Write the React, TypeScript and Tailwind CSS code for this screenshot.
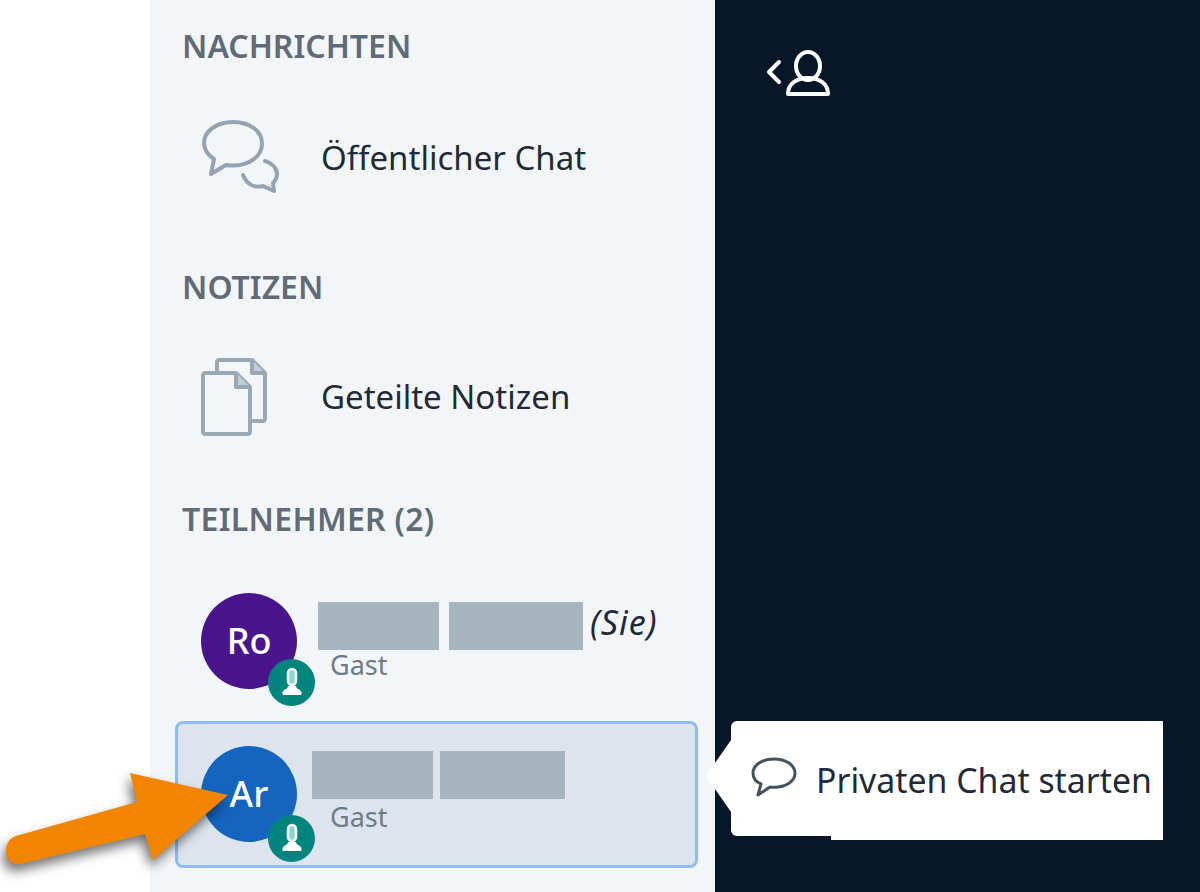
import React from 'react';

const SectionLabel = ({ children, className }: { children: React.ReactNode; className: string }) => (
  <div className={`h-[40px] pl-[32px] text-[32px] leading-[40px] font-semibold text-[#5f6b76] ${className}`}>{children}</div>
);

const BubblesIcon = () => (
  <svg width="80" height="76" viewBox="0 0 80 76" fill="none" stroke="#94a3af" strokeWidth="4" strokeLinejoin="round" strokeLinecap="round">
    <path d="M33 2C17 2 4 11 4 23c0 7 4 12 10 16l-3 15 15-9c2 .4 5 .5 7 .5 16 0 29-9 29-22S49 2 33 2z" />
    <path d="M65 41c7 2 12 7 12 13 0 4-2 7-4 9l1 8-11-5c-8 2-16-1-20-11" />
  </svg>
);

const NotesIcon = () => (
  <svg width="66" height="78" viewBox="0 0 66 78" fill="none" stroke="#9aa8b4" strokeWidth="4" strokeLinejoin="round">
    <path d="M16 13V4c0-1 1-2 2-2h33l13 13v46c0 1-1 2-2 2H49" />
    <path d="M51 2v13h13" fill="#c3ced7" />
    <path d="M4 15h31l14 14v45c0 1-1 2-2 2H4c-1 0-2-1-2-2V17c0-1 1-2 2-2z" />
    <path d="M35 15v14h14" fill="#c3ced7" />
  </svg>
);

const Badge = ({ className }: { className: string }) => (
  <div className={`absolute left-[67px] flex h-[47px] w-[47px] items-center justify-center rounded-full bg-[#00857e] ${className}`}>
    <svg width="26" height="30" viewBox="0 0 26 30">
      <rect x="9" y="2" width="8" height="16" rx="4" fill="#8fd6d2" stroke="#ffffff" strokeWidth="2.5" />
      <path d="M9 19h8c0 2 2 3 4 4 2 2 2 4 1 5H4c-1-1-1-3 1-5 2-1 4-2 4-4z" fill="#ffffff" />
    </svg>
  </div>
);

const Avatar = ({ initials, color, badgeTop }: { initials: string; color: string; badgeTop: string }) => (
  <div className={`relative flex h-[96px] w-[96px] shrink-0 items-center justify-center rounded-full text-[36px] font-medium text-white ${color}`}>
    {initials}
    <Badge className={badgeTop} />
  </div>
);

const ArrowOverlay = () => (
  <svg className="absolute left-0 top-[760px] drop-shadow-[-3px_7px_6px_rgba(0,0,0,0.55)]" width="240" height="120" viewBox="0 760 240 120">
    <path d="M228 795 L130 773 L137 802 L16 836 C2 840 2 866 20 864 L145 834 L153 860 Z" fill="#f28500" />
  </svg>
);

export default function App() {
  return (
    <div className="relative flex h-[892px] w-[1200px] overflow-hidden bg-white font-['Noto_Sans',sans-serif]">
      <div className="w-[150px] shrink-0 bg-white" />

      <div className="flex w-[565px] shrink-0 flex-col bg-[#f3f6f9] pt-[26px]">
        <SectionLabel className="">NACHRICHTEN</SectionLabel>
        <div className="mt-[32px] flex h-[120px] items-center pl-[50px]">
          <BubblesIcon />
          <span className="ml-[41px] text-[33px] text-[#1f2a36]">Öffentlicher Chat</span>
        </div>

        <SectionLabel className="mt-[49px]">NOTIZEN</SectionLabel>
        <div className="mt-[30px] flex h-[120px] items-center pl-[51px]">
          <NotesIcon />
          <span className="ml-[54px] text-[33px] text-[#1f2a36]">Geteilte Notizen</span>
        </div>

        <SectionLabel className="mt-[42px] tracking-[0.3px]">TEILNEHMER (2)</SectionLabel>

        <div className="ml-[25px] mt-[29px] flex h-[147px] w-[523px] items-center border-[3px] border-transparent pb-[2px] pl-[23px]">
          <Avatar initials="Ro" color="bg-[#4a148c]" badgeTop="top-[66px]" />
          <div className="ml-[21px] flex h-[97px] flex-col pt-[10px]">
            <div className="flex h-[48px] shrink-0 items-center">
              <div className="h-[48px] w-[121px] bg-[#a5b4bd]" />
              <div className="ml-[10px] h-[48px] w-[134px] bg-[#a5b4bd]" />
              <span className="mb-[8px] ml-[7px] text-[34px] tracking-[1px] italic text-[#1f2a36]">(Sie)</span>
            </div>
            <span className="ml-[12px] h-[30px] text-[27px] leading-[30px] text-[#6f7b87]">Gast</span>
          </div>
        </div>

        <div className="ml-[25px] mt-[6px] flex h-[147px] w-[523px] items-center rounded-lg border-[3px] border-[#8fbcec] bg-[#dde4ee] pb-[2px] pl-[23px]">
          <Avatar initials="Ar" color="bg-[#1565c0]" badgeTop="top-[69px]" />
          <div className="ml-[15px] flex h-[97px] flex-col pt-[6px]">
            <div className="flex h-[48px] shrink-0 items-center">
              <div className="h-[48px] w-[121px] bg-[#a5b4bd]" />
              <div className="ml-[7px] h-[48px] w-[125px] bg-[#a5b4bd]" />
            </div>
            <span className="ml-[18px] mt-[3px] h-[30px] text-[27px] leading-[30px] text-[#6f7b87]">Gast</span>
          </div>
        </div>
      </div>

      <div className="flex-1 bg-[#06172a] pl-[50px] pt-[50px]">
        <svg width="68" height="46" viewBox="0 0 68 46" fill="none" stroke="#ffffff" strokeWidth="4" strokeLinecap="round" strokeLinejoin="round">
          <path d="M14 12L4 22l10 10" />
          <ellipse cx="43" cy="16" rx="12" ry="14" />
          <path d="M23 44c0-10 8-16 20-16s20 6 20 16z" />
        </svg>
      </div>

      {/* tooltip over the dark panel */}
      <div className="absolute left-[731px] top-[721px] flex h-[115px] w-[432px] items-center rounded-l-md bg-white pl-[20px]">
        <div className="absolute left-[-25px] top-[19px] h-0 w-0 border-y-[36px] border-r-[25px] border-y-transparent border-r-white" />
        <div className="absolute bottom-[-4px] left-[100px] right-0 h-[4px] bg-white" />
        <svg className="mb-[4px]" width="46" height="42" viewBox="0 0 46 42" fill="none" stroke="#44525f" strokeWidth="3" strokeLinejoin="round">
          <path d="M23 3C11 3 2 9 2 17c0 5 3 9 8 11l-3 11 12-8c1 .2 3 .2 4 .2 12 0 21-6 21-14S35 3 23 3z" />
        </svg>
        <span className="ml-[19px] mt-[3px] text-[33.8px] text-[#1f2a36]">Privaten Chat starten</span>
      </div>

      <ArrowOverlay />
    </div>
  );
}
